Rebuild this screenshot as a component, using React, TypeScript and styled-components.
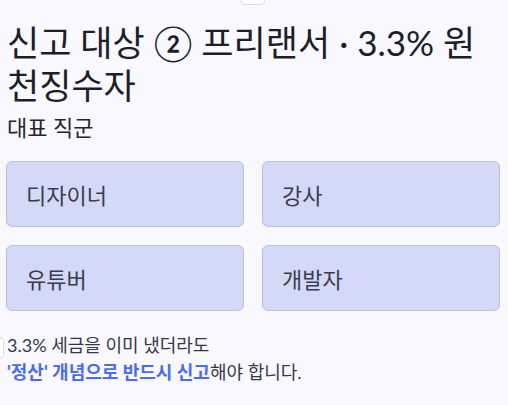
import React from "react";
import styled, { createGlobalStyle } from "styled-components";

const Global = createGlobalStyle`
  html, body { margin: 0; padding: 0; background: #f8f8fe; }
  body { font-family: Lato, "Noto Sans CJK KR", sans-serif; }
`;

const Page = styled.div`
  position: relative;
  min-height: 405px;
  padding: 21px 8px 0 6px;
  box-sizing: border-box;
  overflow: hidden;
`;

const TopTab = styled.div`
  position: absolute;
  top: -6px;
  left: 241px;
  width: 24px;
  height: 11px;
  background: #ffffff;
  border: 1px solid #d9dae6;
  border-radius: 4px;
  box-sizing: border-box;
`;

const SideTab = styled.div`
  position: absolute;
  top: 337px;
  left: -8px;
  width: 12px;
  height: 22px;
  background: #ffffff;
  border: 1px solid #d9dae6;
  border-radius: 4px;
  box-sizing: border-box;
`;

const Title = styled.h1`
  margin: 0 0 0 1px;
  font-size: 35px;
  line-height: 43px;
  font-weight: 400;
  color: #1d1e2c;
`;

const Subtitle = styled.h2`
  margin: 4px 0 0 1px;
  font-size: 22px;
  line-height: 33px;
  font-weight: 400;
  color: #24252f;
`;

const Grid = styled.div`
  display: grid;
  grid-template-columns: 238px 238px;
  gap: 18px;
  margin-top: 17px;
`;

const Card = styled.div`
  height: 66px;
  box-sizing: border-box;
  background: #d3d9f7;
  border: 1px solid #b7bfe6;
  border-radius: 6px;
  display: flex;
  align-items: center;
  padding-left: 19px;
  font-size: 22px;
  color: #3b3d4f;
`;

const Note = styled.p`
  margin: 21px 0 0 1px;
  font-size: 18px;
  line-height: 27px;
  color: #35374a;
`;

const Strong = styled.strong`
  color: #4a6cf2;
  font-weight: 700;
`;

const roles = ["디자이너", "강사", "유튜버", "개발자"];

export default function App() {
  return (
    <>
      <Global />
      <Page>
        <TopTab />
        <SideTab />
        <Title>신고 대상 ② 프리랜서 · 3.3% 원천징수자</Title>
        <Subtitle>대표 직군</Subtitle>
        <Grid>
          {roles.map((r) => (
            <Card key={r}>{r}</Card>
          ))}
        </Grid>
        <Note>
          3.3% 세금을 이미 냈더라도
          <br />
          <Strong>'정산' 개념으로 반드시 신고</Strong>해야 합니다.
        </Note>
      </Page>
    </>
  );
}
